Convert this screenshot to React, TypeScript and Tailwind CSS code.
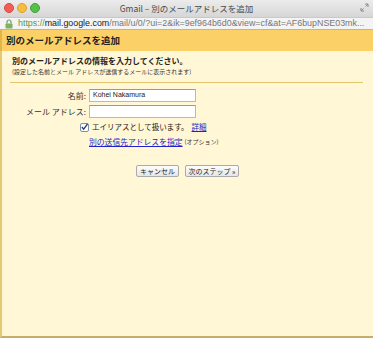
import React from "react";

const jp = { fontFamily: '"Noto Sans CJK JP", "Liberation Sans", sans-serif' };

export default function App() {
  return (
    <div className="w-[373px] h-[338px] flex flex-col overflow-hidden bg-[#fff7d6]" style={jp}>
      {/* title bar */}
      <div className="h-[17px] relative flex items-center justify-center bg-gradient-to-b from-[#ececec] to-[#d6d6d6]">
        <div className="absolute left-[4px] top-[3px] flex gap-[3px]">
          <span className="w-[10px] h-[10px] rounded-full bg-[#f25e57] border border-[#d24a43]" />
          <span className="w-[10px] h-[10px] rounded-full bg-[#f8bd3c] border border-[#d9a031]" />
          <span className="w-[10px] h-[10px] rounded-full bg-[#55c14a] border border-[#3fa23a]" />
        </div>
        <span className="text-[8.5px] leading-none text-[#4a4a4a]">Gmail – 別のメールアドレスを追加</span>
        <svg className="absolute right-[4px] top-[3px]" width="9" height="9" viewBox="0 0 9 9">
          <path d="M5 1h3v3M8 1L5.5 3.5M4 8H1V5M1 8l2.5-2.5" stroke="#8a8a8a" strokeWidth="1" fill="none" />
        </svg>
      </div>
      {/* url bar */}
      <div className="h-[13px] flex items-center bg-[#f4f4f4] border-t border-[#c9c9c9] border-b border-b-[#b5b5b5] pl-[5px] overflow-hidden">
        <svg width="8" height="10" viewBox="0 0 8 10" className="mr-[5px] shrink-0">
          <path d="M2 4.5V3a2 2 0 0 1 4 0v1.5" stroke="#6f9a5a" strokeWidth="1.2" fill="none" />
          <rect x="0.5" y="4.5" width="7" height="5" rx="0.8" fill="#7fb05f" />
        </svg>
        <span className="text-[8.9px] leading-none whitespace-nowrap" style={{ fontFamily: '"Liberation Sans", Arial, sans-serif' }}>
          <span className="text-[#5a9a4a]">https://</span>
          <span className="text-[#222]">mail.google.com</span>
          <span className="text-[#777]">/mail/u/0/?ui=2&amp;ik=9ef964b6d0&amp;view=cf&amp;at=AF6bupNSE03mk...</span>
        </span>
      </div>
      {/* header */}
      <div className="h-[21px] bg-[#fbd066] flex items-center pl-[4px] border-l-2 border-[#e2b44a]">
        <span className="text-[9.5px] font-bold text-[#222] leading-none">別のメールアドレスを追加</span>
      </div>
      {/* body */}
      <div className="flex-1 flex flex-col border-l-2 border-[#e6c772] border-b-2 border-b-[#c8ad6a] px-[8px] pt-[5px]">
        <div className="pl-[2px] text-[8px] font-bold text-[#222] leading-[10px]">別のメールアドレスの情報を入力してください。</div>
        <div className="pl-[2px] text-[6px] text-[#333] leading-[9px] mt-[1px]">(設定した名前とメール アドレスが送信するメールに表示されます)</div>
        <div className="h-px bg-[#e5c46e] mt-[6px] mr-[2px]" />
        <div className="flex flex-col gap-[3px] mt-[6px]">
          <div className="flex items-center">
            <span className="w-[76px] mr-[3px] text-right text-[8px] leading-none text-[#333]">名前:</span>
            <div className="w-[107px] h-[13px] bg-white border border-[#b9b9b9] border-t-[#999] flex items-center pl-[3px] text-[7px] text-[#222]" style={{ fontFamily: '"Liberation Sans", sans-serif' }}>Kohei Nakamura</div>
          </div>
          <div className="flex items-center">
            <span className="w-[76px] mr-[3px] text-right text-[8px] leading-none text-[#333]">メール アドレス:</span>
            <div className="w-[107px] h-[13px] bg-white border border-[#b9b9b9] border-t-[#999]" />
          </div>
        </div>
        <div className="flex items-center h-[10px] mt-[4px] pl-[70px]">
          <span className="w-[9px] h-[9px] bg-white border border-[#7c8fa8] rounded-[2px] flex items-center justify-center mr-[3px]">
            <svg width="8" height="8" viewBox="0 0 8 8"><path d="M1 4l2 2.5L7.5 0.5" stroke="#2a3f6a" strokeWidth="1.5" fill="none" /></svg>
          </span>
          <span className="text-[7.5px] leading-none text-[#222]">エイリアスとして扱います。</span>
          <span className="text-[7.5px] leading-none text-[#2222cc] underline ml-[3px]">詳細</span>
        </div>
        <div className="flex items-center h-[10px] mt-[5px] pl-[79px]">
          <span className="text-[7.8px] leading-none text-[#2222cc] underline">別の送信先アドレスを指定</span>
          <span className="text-[6px] leading-none text-[#333] ml-[2px]">(オプション)</span>
        </div>
        <div className="flex justify-center gap-[6px] mt-[18px]">
          <button className="h-[12px] w-[43px] text-[7px] leading-none text-[#222] rounded-[2px] border border-[#aaa] bg-gradient-to-b from-[#fdfdfd] to-[#e6e6e6]">キャンセル</button>
          <button className="h-[12px] w-[54px] text-[7px] leading-none text-[#222] rounded-[2px] border border-[#aaa] bg-gradient-to-b from-[#fdfdfd] to-[#e6e6e6]">次のステップ »</button>
        </div>
      </div>
    </div>
  );
}
